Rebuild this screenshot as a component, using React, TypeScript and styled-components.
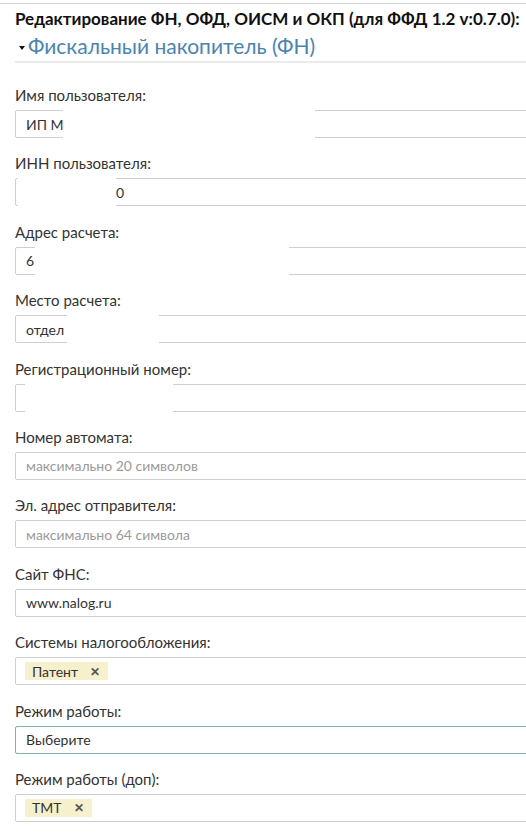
import styled, { createGlobalStyle } from "styled-components";

const GlobalStyle = createGlobalStyle`
  html, body {
    margin: 0;
    padding: 0;
    background: #fff;
    overflow: hidden;
  }
  body {
    font-family: Lato, "Open Sans", sans-serif;
    color: #333;
  }
`;

const Page = styled.div`
  width: 570px;
  margin-top: 3px;
  border-top: 1px solid #d4d4d4;
  padding: 5px 0 0 15px;
`;

const Title = styled.h3`
  margin: 0;
  font-size: 17px;
  line-height: 20px;
  font-weight: 700;
  color: #111;
  white-space: nowrap;
`;

const SectionHeader = styled.div`
  display: flex;
  align-items: center;
  gap: 3px;
  margin-top: 4px;
  padding: 0 0 2px 4px;
  border-bottom: 2px solid #ebebeb;
  font-size: 21px;
  line-height: 26px;
  color: #4a84b2;
`;

const Caret = styled.span`
  width: 0;
  height: 0;
  border-left: 3.5px solid transparent;
  border-right: 3.5px solid transparent;
  border-top: 4px solid #111;
  margin-top: 3px;
`;

const Form = styled.form`
  padding-top: 22px;
`;

const Field = styled.div`
  margin-bottom: 15.4px;
`;

const Label = styled.label`
  display: block;
  font-size: 15px;
  line-height: 20px;
  margin-bottom: 5px;
  color: #333;
`;

const Box = styled.div<{ $focused?: boolean }>`
  position: relative;
  box-sizing: border-box;
  height: 28px;
  display: flex;
  align-items: center;
  gap: 6px;
  padding: 0 10px;
  border: 1px solid ${(p) => (p.$focused ? "#86acb4" : "#cfcfcf")};
  border-radius: 2px;
  font-size: 14px;
  color: #333;
  background: #fff;
`;

const Value = styled.span<{ $indent?: number }>`
  padding-left: ${(p) => p.$indent ?? 0}px;
`;

const Placeholder = styled.span`
  color: #9a9a9a;
`;

// white boxes hiding private data, drawn over the field
const Mask = styled.span<{ $left: number; $width: number }>`
  position: absolute;
  top: -2px;
  bottom: -2px;
  left: ${(p) => p.$left}px;
  width: ${(p) => p.$width}px;
  background: #fff;
`;

const Tag = styled.span`
  display: inline-flex;
  align-items: center;
  gap: 12px;
  height: 18px;
  padding: 0 8px 0 7px;
  margin-left: -1px;
  background: #f7f0cc;
  font-size: 14px;
  color: #333;
`;

const TagClose = styled.span`
  font-size: 12px;
  font-weight: 700;
  color: #555;
`;

type FieldDef = {
  label: string;
  value?: string;
  indent?: number;
  placeholder?: string;
  mask?: [number, number];
  tag?: string;
  focused?: boolean;
};

const fields: FieldDef[] = [
  { label: "Имя пользователя:", value: "ИП М", mask: [47, 252] },
  { label: "ИНН пользователя:", value: "0", indent: 90, mask: [2, 98] },
  { label: "Адрес расчета:", value: "65", mask: [19, 254] },
  { label: "Место расчета:", value: "отдел", mask: [51, 92] },
  { label: "Регистрационный номер:", value: "", mask: [9, 148] },
  { label: "Номер автомата:", placeholder: "максимально 20 символов" },
  { label: "Эл. адрес отправителя:", placeholder: "максимально 64 символа" },
  { label: "Сайт ФНС:", value: "www.nalog.ru" },
  { label: "Системы налогообложения:", tag: "Патент" },
  { label: "Режим работы:", value: "Выберите", focused: true },
  { label: "Режим работы (доп):", tag: "ТМТ" },
];

export default function App() {
  return (
    <Page>
      <GlobalStyle />
      <Title>Редактирование ФН, ОФД, ОИСМ и ОКП (для ФФД 1.2 v:0.7.0):</Title>
      <SectionHeader>
        <Caret />
        Фискальный накопитель (ФН)
      </SectionHeader>
      <Form>
        {fields.map((f) => (
          <Field key={f.label}>
            <Label>{f.label}</Label>
            <Box $focused={f.focused}>
              {f.tag ? (
                <Tag>
                  {f.tag}
                  <TagClose>✕</TagClose>
                </Tag>
              ) : f.placeholder ? (
                <Placeholder>{f.placeholder}</Placeholder>
              ) : (
                <Value $indent={f.indent}>{f.value}</Value>
              )}
              {f.mask && <Mask $left={f.mask[0]} $width={f.mask[1]} />}
            </Box>
          </Field>
        ))}
      </Form>
    </Page>
  );
}
